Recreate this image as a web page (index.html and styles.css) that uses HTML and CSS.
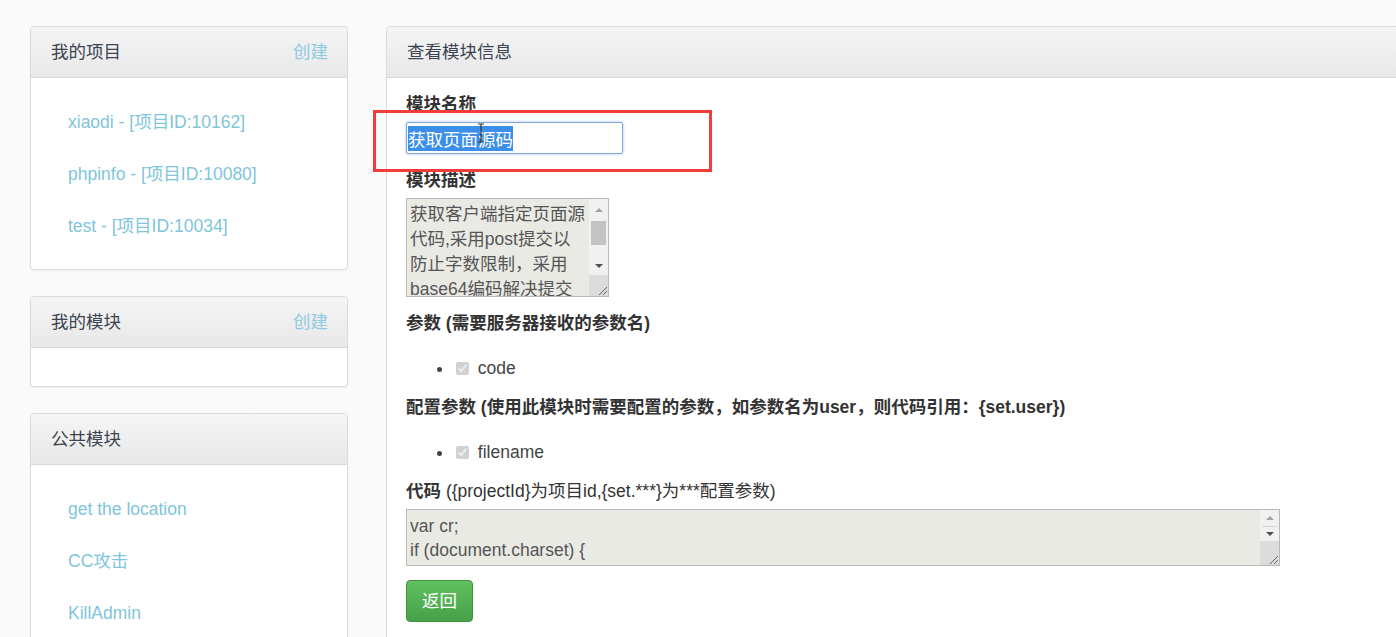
FILE: index.html
```html
<!DOCTYPE html>
<html lang="zh-CN">
<head>
    <meta charset="UTF-8">
    <meta name="viewport" content="width=device-width, initial-scale=1.0">
    <title>查看模块信息</title>
    <link rel="stylesheet" href="styles.css">
</head>
<body>
    <div class="page">
        <div class="sidebar">
            <div class="panel">
                <div class="panel-head">
                    <span>我的项目</span>
                    <a href="#" class="head-link">创建</a>
                </div>
                <ul class="link-list">
                    <li><a href="#">xiaodi - [项目ID:10162]</a></li>
                    <li><a href="#">phpinfo - [项目ID:10080]</a></li>
                    <li><a href="#">test - [项目ID:10034]</a></li>
                </ul>
            </div>

            <div class="panel">
                <div class="panel-head">
                    <span>我的模块</span>
                    <a href="#" class="head-link">创建</a>
                </div>
                <div class="panel-empty"></div>
            </div>

            <div class="panel">
                <div class="panel-head">
                    <span>公共模块</span>
                </div>
                <ul class="link-list">
                    <li><a href="#">get the location</a></li>
                    <li><a href="#">CC攻击</a></li>
                    <li><a href="#">KillAdmin</a></li>
                </ul>
            </div>
        </div>

        <div class="panel main-panel">
            <div class="panel-head">
                <span>查看模块信息</span>
            </div>
            <div class="form-body">
                <label class="field-label">模块名称</label>
                <input type="text" class="name-input" id="moduleName" value="获取页面源码">

                <label class="field-label">模块描述</label>
                <div class="text-box desc-box">
                    <textarea class="box-text" readonly>获取客户端指定页面源代码,采用post提交以防止字数限制，采用base64编码解决提交的编码问题，filename为接收的文件名</textarea>
                    <div class="vscroll">
                        <span class="arrow-cell"><i class="tri tri-up"></i></span>
                        <span class="thumb"></span>
                        <span class="track"></span>
                        <span class="arrow-cell down-cell"><i class="tri tri-down"></i></span>
                        <span class="grip">
                            <svg width="12" height="12" viewBox="0 0 12 12"><path d="M11 3L3 11M11 7L7 11" stroke="#666" stroke-width="1" fill="none"/></svg>
                        </span>
                    </div>
                </div>

                <label class="field-label">参数 (需要服务器接收的参数名)</label>
                <ul class="check-list">
                    <li><input type="checkbox" checked disabled> code</li>
                </ul>

                <label class="field-label">配置参数 (使用此模块时需要配置的参数，如参数名为user，则代码引用：{set.user})</label>
                <ul class="check-list">
                    <li><input type="checkbox" checked disabled> filename</li>
                </ul>

                <label class="field-label">代码 <span class="hint">({projectId}为项目id,{set.***}为***配置参数)</span></label>
                <div class="text-box code-box">
                    <textarea class="box-text" readonly>var cr;
if (document.charset) {
    cr = document.charset;
} else if (document.characterSet) {
    cr = document.characterSet;
}</textarea>
                    <div class="vscroll">
                        <span class="arrow-cell up-cell"><i class="tri tri-up"></i></span>
                        <span class="arrow-cell down-cell"><i class="tri tri-down"></i></span>
                        <span class="grip">
                            <svg width="12" height="12" viewBox="0 0 12 12"><path d="M11 3L3 11M11 7L7 11" stroke="#666" stroke-width="1" fill="none"/></svg>
                        </span>
                    </div>
                </div>

                <button class="btn-back">返回</button>
            </div>

            <!-- annotation box drawn over the name field -->
            <div class="mark"></div>
            <svg class="ibeam" width="8" height="20" viewBox="0 0 8 20">
                <path d="M1 1h6M1 19h6M4 1v18" stroke="#333" stroke-width="1.2" fill="none"/>
            </svg>
        </div>
    </div>

    <script>
        // keep the module name highlighted like in the capture
        const nameInput = document.getElementById('moduleName');
        nameInput.focus();
        nameInput.select();
    </script>
</body>
</html>
```

FILE: styles.css
```css
html, body {
    height: 100%;
}
body {
    margin: 0;
    background-color: #fafafa;
    font-family: "Liberation Sans", "Noto Sans CJK SC", sans-serif;
    font-size: 17.5px;
    line-height: 24px;
    color: #333;
    overflow: hidden;
}
a {
    color: #80c5db;
    text-decoration: none;
}
.page {
    display: flex;
    align-items: flex-start;
    gap: 38px;
    padding: 26px 0 0 30px;
}
.sidebar {
    flex: 0 0 318px;
    display: flex;
    flex-direction: column;
    gap: 26px;
}
.panel {
    background-color: #fff;
    border: 1px solid #dcdcdc;
    border-radius: 4px;
    box-shadow: 0 1px 2px rgba(0,0,0,0.05);
}
.panel-head {
    display: flex;
    justify-content: space-between;
    align-items: center;
    height: 50px;
    padding: 0 19px 0 20px;
    border-bottom: 1px solid #d9d9d9;
    border-radius: 4px 4px 0 0;
    background: linear-gradient(#f5f5f5, #e8e8e8);
    color: #3b4450;
}
.head-link {
    color: #8ccbe0;
}
.link-list {
    list-style: none;
    margin: 0;
    padding: 18px 0 17px 37px;
}
.link-list li {
    height: 52px;
    line-height: 52px;
}
.panel-empty {
    height: 38px;
}
.main-panel {
    position: relative;
    flex: 0 0 1040px;
    height: 700px;
}
.form-body {
    display: flex;
    flex-direction: column;
    align-items: flex-start;
    padding: 14px 19px 0 19px;
}
.field-label {
    display: block;
    font-weight: bold;
    margin-bottom: 6px;
}
.hint {
    font-weight: normal;
}
.name-input {
    box-sizing: border-box;
    width: 217px;
    height: 32px;
    margin: 0 0 14px 0;
    padding: 0 1px;
    font: inherit;
    color: #333;
    border: 1px solid #7fa6d9;
    border-radius: 2px;
    box-shadow: 0 0 3px rgba(82,140,220,0.5);
    outline: none;
}
.name-input::selection {
    background-color: #3c8fe8;
    color: #fff;
}

/* read-only boxes with a drawn scrollbar column */
.text-box {
    display: flex;
    box-sizing: border-box;
    border: 1px solid #b9b9b9;
    background-color: #eaeae5;
}
.box-text {
    flex: 1;
    margin: 0;
    padding: 3px 3px;
    font: inherit;
    line-height: 25px;
    color: #555;
    background: transparent;
    border: 0;
    outline: none;
    resize: none;
    overflow: hidden;
}
.desc-box {
    width: 203px;
    height: 99px;
    margin-bottom: 14px;
}
.code-box {
    width: 874px;
    height: 57px;
    margin-bottom: 14px;
}
.code-box .box-text {
    line-height: 24px;
    padding-top: 4px;
    white-space: pre;
}
.vscroll {
    flex: 0 0 19px;
    display: flex;
    flex-direction: column;
    background-color: #f1f1f1;
}
.arrow-cell {
    display: flex;
    justify-content: center;
    align-items: center;
    height: 22px;
}
.down-cell {
    height: 19px;
}
.code-box .up-cell {
    height: 16px;
    border-bottom: 1px solid #d6d6d6;
    margin: 0 2px;
}
.code-box .down-cell {
    height: 14px;
}
.tri {
    width: 0;
    height: 0;
    border-left: 4px solid transparent;
    border-right: 4px solid transparent;
}
.tri-up {
    border-bottom: 4px solid #a3a3a3;
}
.tri-down {
    border-top: 4px solid #505050;
}
.thumb {
    height: 24px;
    margin: 0 2px;
    background-color: #c3c3c3;
}
.track {
    flex: 1;
}
.grip {
    display: flex;
    justify-content: flex-end;
    align-items: flex-end;
    height: 21px;
    margin-top: auto;
    background-color: #dcdcdc;
}
.code-box .grip {
    flex: 1;
    height: auto;
}
.check-list {
    margin: 15px 0 15px 0;
    padding-left: 48px;
}
.check-list li {
    line-height: 24px;
    color: #444;
}
.check-list input {
    margin: 0 4px 0 2px;
    vertical-align: -1px;
}
.btn-back {
    width: 67px;
    height: 42px;
    padding: 0;
    font: inherit;
    color: #fff;
    background: linear-gradient(#5fc15f, #48a048);
    border: 1px solid #3f923f;
    border-radius: 4px;
    cursor: pointer;
}
.mark {
    position: absolute;
    left: -14px;
    top: 83px;
    width: 333px;
    height: 56px;
    border: 3px solid #f23b3b;
}
.ibeam {
    position: absolute;
    left: 90px;
    top: 96px;
}
```
